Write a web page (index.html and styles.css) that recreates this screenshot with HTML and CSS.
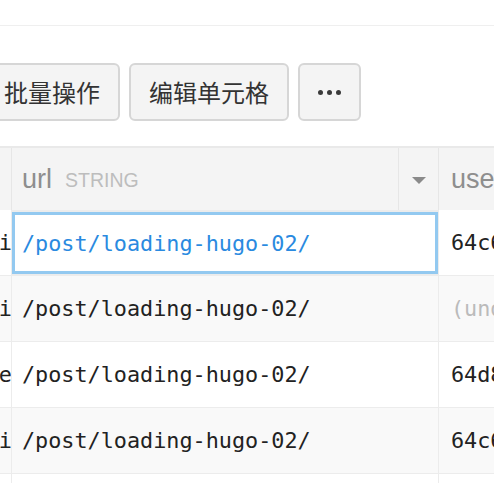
FILE: index.html
```html
<!DOCTYPE html>
<html>
<head>
<meta charset="utf-8">
<link rel="stylesheet" href="styles.css">
</head>
<body>
<div class="topbar"></div>
<div class="toolbar">
  <button class="btn">批量操作</button>
  <button class="btn">编辑单元格</button>
  <button class="btn btn-more"><span class="dot"></span><span class="dot"></span><span class="dot"></span></button>
</div>
<div class="table">
  <div class="row head">
    <div class="cell c1"></div>
    <div class="cell c2 hcell">
      <div class="hlabel"><span class="hname">url</span><span class="htype">STRING</span></div>
      <div class="harrow"><span class="tri"></span></div>
    </div>
    <div class="cell c3"><span class="hname">user_agent</span></div>
  </div>
  <div class="row">
    <div class="cell c1 mono"><span>Ni</span></div>
    <div class="cell c2 mono sel">/post/loading-hugo-02/</div>
    <div class="cell c3 mono">64c61a2b</div>
  </div>
  <div class="row alt">
    <div class="cell c1 mono"><span>Ni</span></div>
    <div class="cell c2 mono">/post/loading-hugo-02/</div>
    <div class="cell c3 mono undef">(undefined)</div>
  </div>
  <div class="row">
    <div class="cell c1 mono"><span>ie</span></div>
    <div class="cell c2 mono">/post/loading-hugo-02/</div>
    <div class="cell c3 mono">64d8a0c1</div>
  </div>
  <div class="row alt">
    <div class="cell c1 mono"><span>Ni</span></div>
    <div class="cell c2 mono">/post/loading-hugo-02/</div>
    <div class="cell c3 mono">64c61a2b</div>
  </div>
  <div class="row">
    <div class="cell c1 mono"></div>
    <div class="cell c2 mono"></div>
    <div class="cell c3 mono"></div>
  </div>
</div>
</body>
</html>
```

FILE: styles.css
```css
html, body {
  margin: 0;
  padding: 0;
  background: #ffffff;
  overflow: hidden;
  width: 494px;
  height: 483px;
}
body {
  font-family: "Noto Sans CJK SC", "Noto Sans", sans-serif;
}
.topbar {
  height: 25px;
  border-bottom: 1px solid #efefef;
}
.toolbar {
  display: flex;
  gap: 9px;
  margin: 37px 0 0 -16px;
  height: 58px;
}
.btn {
  box-sizing: border-box;
  height: 58px;
  padding: 0 18px;
  border: 2px solid #d6d6d6;
  border-radius: 6px;
  background: #f4f4f4;
  color: #333333;
  font-family: "Noto Sans CJK SC", sans-serif;
  font-size: 24px;
  line-height: 1;
  display: flex;
  align-items: center;
}
.btn-more {
  width: 63px;
  justify-content: center;
  gap: 4px;
  padding: 0;
}
.dot {
  width: 5px;
  height: 5px;
  border-radius: 50%;
  background: #3a3a3a;
}
.table {
  margin-top: 25px;
  border-top: 2px solid #e9e9e9;
}
.row {
  display: grid;
  grid-template-columns: 11px 426px 1fr;
  column-gap: 1px;
  background: #ececec;
  height: 66px;
  border-bottom: 1px solid #ececec;
  box-sizing: border-box;
}
.row.head {
  height: 62px;
  border-bottom: none;
  background: #e6e6e6;
}
.cell {
  background: #ffffff;
  display: flex;
  align-items: center;
  overflow: hidden;
  white-space: nowrap;
  box-sizing: border-box;
}
.row.alt .cell {
  background: #f9f9f9;
}
.row.head .cell {
  background: #f4f4f4;
}
.mono {
  font-family: "DejaVu Sans Mono", "Liberation Mono", monospace;
  font-size: 21.8px;
  color: #222222;
}
.c1 {
  justify-content: flex-end;
}
.c1 span {
  margin-right: -1px;
}
.c2 {
  padding-left: 10px;
}
.c3 {
  padding-left: 12px;
}
.sel {
  color: #2a8ae0;
  box-shadow: inset 0 0 0 3px #93c9f0;
  margin: 2px 0 1px 0;
}
.undef {
  color: #bbbbbb;
}
.hcell {
  padding-left: 0;
  background: #e6e6e6 !important;
  display: flex;
  gap: 1px;
  align-items: stretch;
}
.hlabel {
  flex: 1;
  background: #f4f4f4;
  display: flex;
  align-items: center;
  padding-left: 10px;
  gap: 13px;
}
.harrow {
  width: 39px;
  background: #f4f4f4;
  display: flex;
  align-items: center;
  justify-content: center;
}
.tri {
  width: 0;
  height: 0;
  border-left: 7px solid transparent;
  border-right: 7px solid transparent;
  border-top: 7px solid #8a8a8a;
  margin-top: 2px;
}
.hname {
  font-family: "Liberation Sans", Arial, sans-serif;
  font-size: 27px;
  color: #8e8e8e;
}
.htype {
  font-family: "Liberation Sans", Arial, sans-serif;
  font-size: 19.5px;
  color: #bdbdbd;
  margin-top: 3px;
}
```
